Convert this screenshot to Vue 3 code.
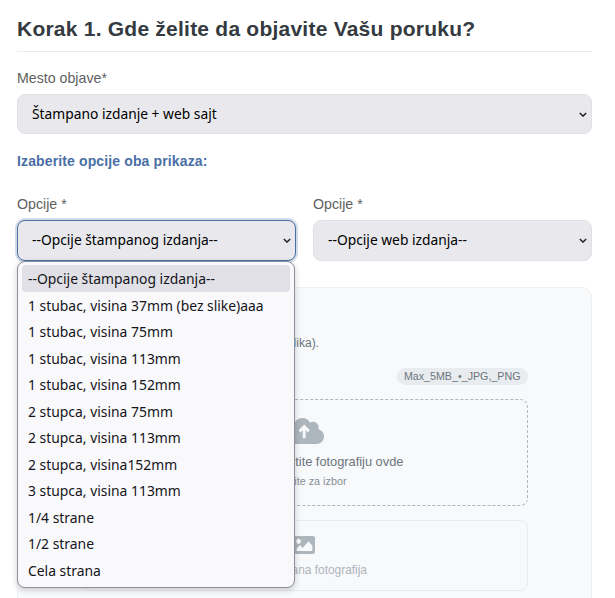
<template>
  <div class="page">
    <h2 class="title">Korak 1. Gde želite da objavite Vašu poruku?</h2>

    <div class="field">
      <label class="label">Mesto objave*</label>
      <div class="select-wrap">
        <select class="select">
          <option>Štampano izdanje + web sajt</option>
        </select>
        <svg class="chevron" viewBox="0 0 10 6"><path d="M1 1l4 4 4-4" /></svg>
      </div>
    </div>

    <p class="hint">Izaberite opcije oba prikaza:</p>

    <div class="two-cols">
      <div class="col">
        <label class="label">Opcije *</label>
        <div class="select-wrap">
          <select class="select tall focused">
            <option>--Opcije štampanog izdanja--</option>
          </select>
          <svg class="chevron" viewBox="0 0 10 6"><path d="M1 1l4 4 4-4" /></svg>
          <ul class="menu">
            <li
              v-for="(opt, i) in printOptions"
              :key="opt"
              class="menu-item"
              :class="{ active: i === 0 }"
            >{{ opt }}</li>
          </ul>
        </div>
      </div>
      <div class="col">
        <label class="label">Opcije *</label>
        <div class="select-wrap">
          <select class="select tall">
            <option>--Opcije web izdanja--</option>
          </select>
          <svg class="chevron" viewBox="0 0 10 6"><path d="M1 1l4 4 4-4" /></svg>
        </div>
      </div>
    </div>

    <div class="card">
      <div class="card-inner">
        <h3 class="card-title">Fotografija</h3>
        <p class="card-text">Postavite fotografiju uz oglas (opciona slika).</p>
        <div class="badge-row">
          <span class="badge">Max_5MB_•_JPG,_PNG</span>
        </div>
        <div class="dropzone">
          <svg class="cloud" viewBox="0 0 640 448" preserveAspectRatio="none">
            <g transform="translate(0 -32)">
              <path d="M537.600 226.600c4.100-10.700 6.400-22.400 6.400-34.600 0-53-43-96-96-96-19.700 0-38.100 6-53.300 16.200C367 64.200 315.300 32 256 32c-88.400 0-160 71.600-160 160 0 2.700.1 5.400.2 8.100C40.200 219.800 0 273.200 0 336c0 79.500 64.500 144 144 144h368c70.700 0 128-57.300 128-128 0-61.900-44-113.600-102.400-125.400z" />
              <path class="arrow" d="M288 380V190M205 262l83-82 83 82" />
            </g>
          </svg>
          <div class="drop-title">Prevucite ili pustite fotografiju ovde</div>
          <div class="drop-sub">ili kliknite za izbor</div>
        </div>
        <div class="preview">
          <svg class="pic" viewBox="0 64 512 384" preserveAspectRatio="none">
            <path d="M464 448H48c-26.510 0-48-21.490-48-48V112c0-26.510 21.490-48 48-48h416c26.510 0 48 21.490 48 48v288c0 26.510-21.490 48-48 48zM112 120c-30.928 0-56 25.072-56 56s25.072 56 56 56 56-25.072 56-56-25.072-56-56-56zM64 384h384V272l-87.515-87.515c-4.686-4.686-12.284-4.686-16.971 0L208 320l-55.515-55.515c-4.686-4.686-12.284-4.686-16.971 0L64 336v48z" />
          </svg>
          <div class="preview-text">Nije izabrana fotografija</div>
        </div>
      </div>
    </div>
  </div>
</template>

<script setup>
const printOptions = [
  '--Opcije štampanog izdanja--',
  '1 stubac, visina 37mm (bez slike)aaa',
  '1 stubac, visina 75mm',
  '1 stubac, visina 113mm',
  '1 stubac, visina 152mm',
  '2 stupca, visina 75mm',
  '2 stupca, visina 113mm',
  '2 stupca, visina152mm',
  '3 stupca, visina 113mm',
  '1/4 strane',
  '1/2 strane',
  'Cela strana'
]
</script>

<style>
html, body {
  margin: 0;
  background: #fff;
  overflow: hidden;
}
</style>

<style scoped>
.page {
  box-sizing: border-box;
  width: 615px;
  height: 598px;
  padding: 16px 23px 0 17px;
  overflow: hidden;
  font-family: "Liberation Sans", Arial, sans-serif;
  color: #333;
}

.title {
  margin: 0 0 18px;
  padding-bottom: 9px;
  border-bottom: 1px solid #e9ecef;
  font-size: 21px;
  line-height: 26px;
  font-weight: 700;
  letter-spacing: 0.23px;
  color: #343a40;
}

.label {
  display: block;
  margin-bottom: 7px;
  font-size: 14.200px;
  line-height: 17px;
  color: #5f5f5f;
}

.select-wrap {
  position: relative;
}

.select {
  display: block;
  box-sizing: border-box;
  width: 100%;
  height: 40px;
  padding: 0 30px 2px 14px;
  appearance: none;
  border: 1px solid #dee2e6;
  border-radius: 8px;
  background: #e9e9ed;
  font-family: "Noto Sans", sans-serif;
  font-size: 13.800px;
  color: #000;
  outline: none;
}

.select.tall {
  height: 41px;
}

.select.focused {
  border-color: #4a6fa5;
  box-shadow: 0 0 0 2px rgba(74, 111, 165, 0.25);
}

.chevron {
  position: absolute;
  top: 18px;
  right: 5px;
  width: 8px;
  height: 5px;
  fill: none;
  stroke: #222;
  stroke-width: 1.8;
  pointer-events: none;
}

.hint {
  margin: 19px 0 27px;
  font-size: 14px;
  line-height: 16px;
  font-weight: 700;
  letter-spacing: 0.13px;
  color: #4a6fa5;
}

.two-cols {
  display: grid;
  grid-template-columns: 1fr 1fr;
  gap: 17px;
}

.menu {
  position: absolute;
  z-index: 5;
  top: 41px;
  left: 0;
  right: 1px;
  box-sizing: border-box;
  height: 327px;
  margin: 0;
  padding: 3px 4px 0;
  list-style: none;
  background: #f9f9fb;
  border: 1px solid #8f8f9d;
  border-radius: 8px;
  box-shadow: 0 2px 6px rgba(0, 0, 0, 0.2);
  font-family: "Noto Sans", sans-serif;
  font-size: 13.900px;
  color: #15141a;
}

.menu-item {
  height: 26.500px;
  padding: 0 6px;
  line-height: 28px;
  border-radius: 4px;
  white-space: nowrap;
}

.menu-item.active {
  background: #e0e0e6;
}

.card {
  margin-top: 26px;
  padding: 24px 16px;
  height: 340px;
  box-sizing: border-box;
  background: #f8f9fa;
  border: 1px solid #eef0f2;
  border-radius: 10px;
}

.card-inner {
  width: 446px;
  margin: 0 auto;
}

.card-title {
  margin: 0 0 5px;
  font-size: 15px;
  line-height: 18px;
  color: #343a40;
}

.card-text {
  margin: 0 0 17px;
  font-size: 12px;
  line-height: 16px;
  color: #6c757d;
}

.badge-row {
  display: flex;
  justify-content: flex-end;
  margin-bottom: 14px;
}

.badge {
  padding: 0 7px;
  height: 17px;
  line-height: 17px;
  font-size: 10.700px;
  border-radius: 9px;
  background: #e9ecef;
  color: #6c757d;
}

.dropzone {
  display: flex;
  flex-direction: column;
  align-items: center;
  box-sizing: border-box;
  height: 107px;
  padding-top: 18px;
  border: 1px dashed #adb5bd;
  border-radius: 8px;
}

.cloud {
  width: 36px;
  height: 26px;
  margin-left: 2px;
  fill: #adb5bd;
}

.cloud .arrow {
  fill: none;
  stroke: #f8f9fa;
  stroke-width: 50;
}

.drop-title {
  margin-top: 10px;
  font-size: 12.800px;
  line-height: 16px;
  color: #6c757d;
}

.drop-sub {
  margin-top: 4px;
  font-size: 10.800px;
  line-height: 14px;
  color: #868e96;
}

.preview {
  display: flex;
  flex-direction: column;
  align-items: center;
  box-sizing: border-box;
  height: 71px;
  margin-top: 14px;
  padding-top: 15px;
  border: 1px solid #e9ecef;
  border-radius: 8px;
}

.pic {
  width: 21px;
  height: 18px;
  fill: #adb5bd;
}

.preview-text {
  margin-top: 8px;
  font-size: 11.900px;
  line-height: 16px;
  color: #adb5bd;
}
</style>
